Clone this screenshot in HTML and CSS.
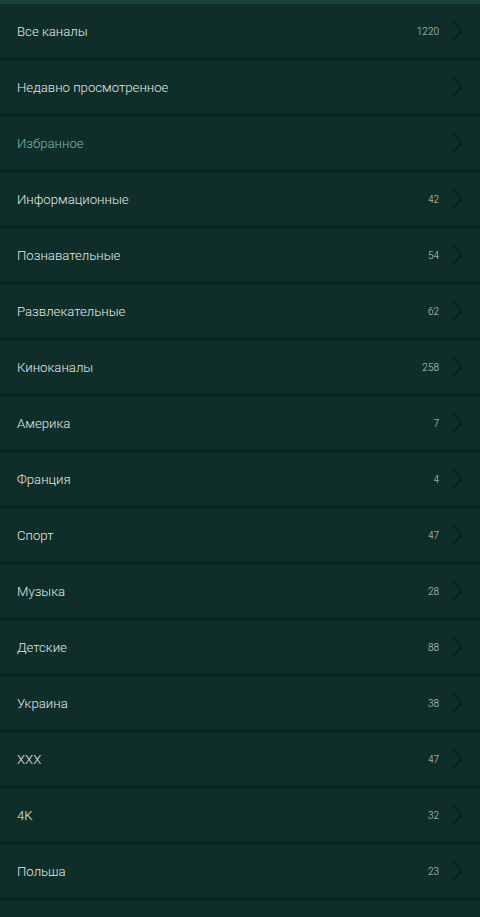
FILE: index.html
```html
<!DOCTYPE html>
<html lang="ru">
<head>
<meta charset="utf-8">
<link rel="stylesheet" href="styles.css">
</head>
<body>
<div class="topbar"></div>
<ul class="list">
  <li class="row"><span class="name">Все каналы</span><span class="count">1220</span><svg class="chev" viewBox="0 0 12 24"><path d="M1.5 1.5 L10.5 12 L1.5 22.5"/></svg></li>
  <li class="row"><span class="name">Недавно просмотренное</span><span class="count"></span><svg class="chev" viewBox="0 0 12 24"><path d="M1.5 1.5 L10.5 12 L1.5 22.5"/></svg></li>
  <li class="row"><span class="name active">Избранное</span><span class="count"></span><svg class="chev" viewBox="0 0 12 24"><path d="M1.5 1.5 L10.5 12 L1.5 22.5"/></svg></li>
  <li class="row"><span class="name">Информационные</span><span class="count">42</span><svg class="chev" viewBox="0 0 12 24"><path d="M1.5 1.5 L10.5 12 L1.5 22.5"/></svg></li>
  <li class="row"><span class="name">Познавательные</span><span class="count">54</span><svg class="chev" viewBox="0 0 12 24"><path d="M1.5 1.5 L10.5 12 L1.5 22.5"/></svg></li>
  <li class="row"><span class="name">Развлекательные</span><span class="count">62</span><svg class="chev" viewBox="0 0 12 24"><path d="M1.5 1.5 L10.5 12 L1.5 22.5"/></svg></li>
  <li class="row"><span class="name">Киноканалы</span><span class="count">258</span><svg class="chev" viewBox="0 0 12 24"><path d="M1.5 1.5 L10.5 12 L1.5 22.5"/></svg></li>
  <li class="row"><span class="name">Америка</span><span class="count">7</span><svg class="chev" viewBox="0 0 12 24"><path d="M1.5 1.5 L10.5 12 L1.5 22.5"/></svg></li>
  <li class="row"><span class="name">Франция</span><span class="count">4</span><svg class="chev" viewBox="0 0 12 24"><path d="M1.5 1.5 L10.5 12 L1.5 22.5"/></svg></li>
  <li class="row"><span class="name">Спорт</span><span class="count">47</span><svg class="chev" viewBox="0 0 12 24"><path d="M1.5 1.5 L10.5 12 L1.5 22.5"/></svg></li>
  <li class="row"><span class="name">Музыка</span><span class="count">28</span><svg class="chev" viewBox="0 0 12 24"><path d="M1.5 1.5 L10.5 12 L1.5 22.5"/></svg></li>
  <li class="row"><span class="name">Детские</span><span class="count">88</span><svg class="chev" viewBox="0 0 12 24"><path d="M1.5 1.5 L10.5 12 L1.5 22.5"/></svg></li>
  <li class="row"><span class="name">Украина</span><span class="count">38</span><svg class="chev" viewBox="0 0 12 24"><path d="M1.5 1.5 L10.5 12 L1.5 22.5"/></svg></li>
  <li class="row"><span class="name">XXX</span><span class="count">47</span><svg class="chev" viewBox="0 0 12 24"><path d="M1.5 1.5 L10.5 12 L1.5 22.5"/></svg></li>
  <li class="row"><span class="name">4K</span><span class="count">32</span><svg class="chev" viewBox="0 0 12 24"><path d="M1.5 1.5 L10.5 12 L1.5 22.5"/></svg></li>
  <li class="row"><span class="name">Польша</span><span class="count">23</span><svg class="chev" viewBox="0 0 12 24"><path d="M1.5 1.5 L10.5 12 L1.5 22.5"/></svg></li>
  <li class="row"><span class="name"></span><span class="count"></span></li>
</ul>
</body>
</html>
```

FILE: styles.css
```css
html, body {
  margin: 0;
  padding: 0;
  background: #0f2e2a;
  height: 917px;
  overflow: hidden;
}
body {
  font-family: Roboto, "Noto Sans", sans-serif;
}
.topbar {
  height: 4px;
  background: #17443b;
}
.list {
  list-style: none;
  margin: 0;
  padding: 0;
}
.row {
  display: flex;
  align-items: center;
  box-sizing: border-box;
  height: 56px;
  padding: 1px 17px 0 17px;
  border-bottom: 2px solid #0a2420;
}
.name {
  flex: 1;
  font-size: 13.2px;
  font-weight: 300;
  color: #e2e9e6;
}
.name.active {
  color: #7ab5a3;
}
.count {
  font-size: 10px;
  font-weight: 300;
  color: #c3cfcb;
  margin-right: 12px;
}
.chev {
  width: 12px;
  height: 24px;
  margin-top: -1px;
}
.chev path {
  fill: none;
  stroke: #09221f;
  stroke-width: 1.8;
}
```
